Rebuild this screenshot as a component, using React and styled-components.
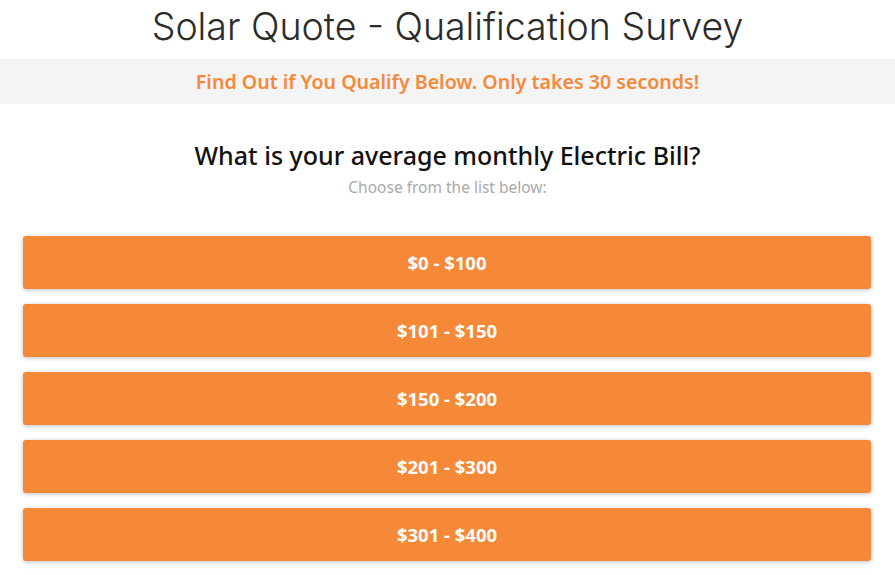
import React from "react";
import styled, { createGlobalStyle } from "styled-components";

const GlobalStyle = createGlobalStyle`
  body {
    margin: 0;
    background: #fff;
    font-family: "Noto Sans", "Open Sans", sans-serif;
    overflow: hidden;
  }
`;

const Title = styled.h1`
  margin: 0;
  height: 59px;
  display: flex;
  align-items: center;
  justify-content: center;
  font-family: "Inter", sans-serif;
  font-weight: 300;
  font-size: 37.5px;
  color: #2b2b2b;
  padding-bottom: 6px;
  box-sizing: border-box;
`;

const Banner = styled.div`
  background: #f4f4f4;
  height: 45px;
  display: flex;
  align-items: center;
  justify-content: center;
  color: #f5893a;
  font-weight: 600;
  font-size: 19.6px;
`;

const Question = styled.div`
  text-align: center;
  padding-top: 36px;
  h2 {
    margin: 0;
    font-size: 25px;
    font-weight: 500;
    color: #111;
    line-height: 30px;
  }
  p {
    margin: 6px 0 0;
    font-size: 15.5px;
    line-height: 22px;
    color: #aaa;
  }
`;

const Options = styled.div`
  display: flex;
  flex-direction: column;
  gap: 15px;
  padding: 38px 24px 0 23px;
`;

const Option = styled.button`
  height: 53px;
  padding-bottom: 2px;
  border: none;
  border-radius: 3px;
  background: ${(p) => (p.$faded ? "#fcfcfc" : "#f58938")};
  color: #fff;
  font-family: "Noto Sans", sans-serif;
  font-weight: 700;
  font-size: 18.5px;
  box-shadow: 0 1px 4px rgba(0, 0, 0, ${(p) => (p.$faded ? 0.08 : 0.25)});
  cursor: pointer;
`;

const options = ["$0 - $100", "$101 - $150", "$150 - $200", "$201 - $300", "$301 - $400"];

export default function App() {
  return (
    <>
      <GlobalStyle />
      <Title>Solar Quote - Qualification Survey</Title>
      <Banner>Find Out if You Qualify Below. Only takes 30 seconds!</Banner>
      <Question>
        <h2>What is your average monthly Electric Bill?</h2>
        <p>Choose from the list below:</p>
      </Question>
      <Options>
        {options.map((o) => (
          <Option key={o}>{o}</Option>
        ))}
        <Option $faded aria-hidden="true" />
      </Options>
    </>
  );
}
